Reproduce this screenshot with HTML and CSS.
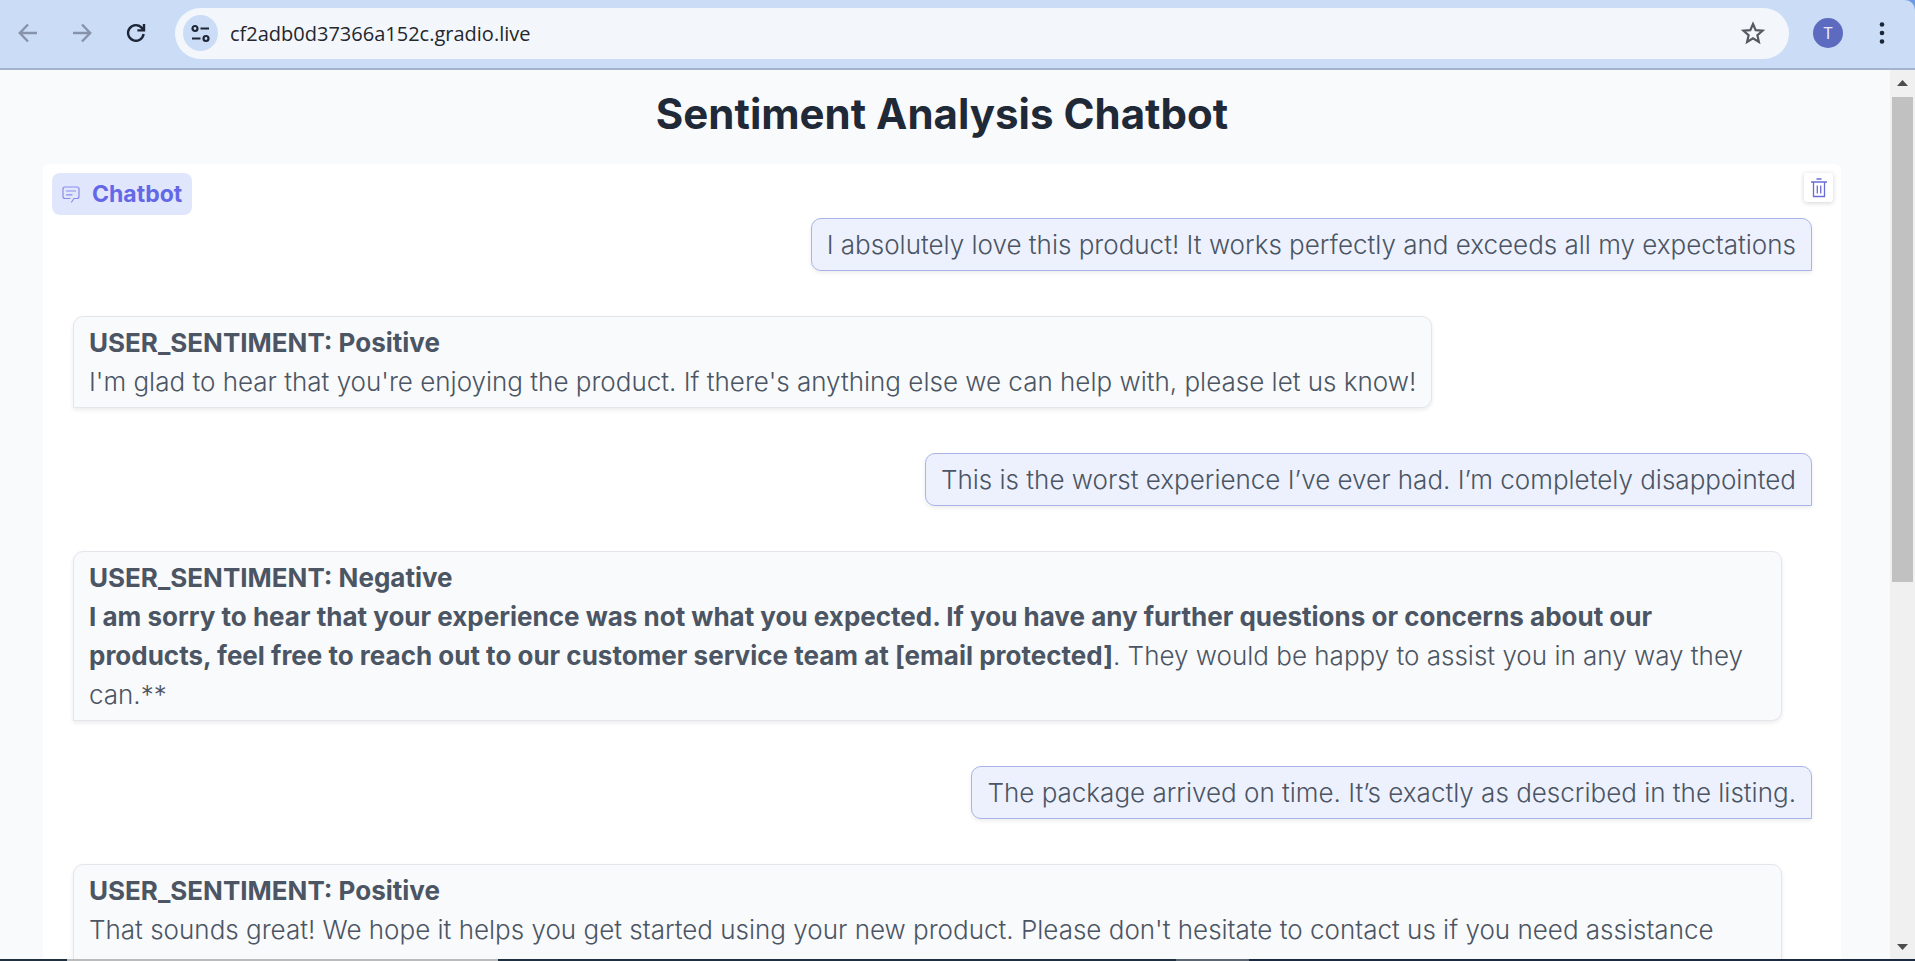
FILE: index.html
```html
<!DOCTYPE html>
<html lang="en">
<head>
<meta charset="utf-8">
<title>Sentiment Analysis Chatbot</title>
<link rel="stylesheet" href="styles.css">
</head>
<body>
<div class="browser-frame">
<header class="toolbar">
  <button class="tool-button tool-button-muted" aria-label="Back">
    <svg width="20" height="20" viewBox="0 0 20 20" fill="none" stroke="currentColor" stroke-width="2.4"><path d="M19 10H2M10 1.5L1.8 10L10 18.5"/></svg>
  </button>
  <button class="tool-button tool-button-muted" aria-label="Forward">
    <svg width="20" height="20" viewBox="0 0 20 20" fill="none" stroke="currentColor" stroke-width="2.4"><path d="M1 10H18M10 1.5L18.2 10L10 18.5"/></svg>
  </button>
  <button class="tool-button" aria-label="Reload">
    <svg width="20" height="20" viewBox="0 0 20 20" fill="none" stroke="currentColor" stroke-width="2.4"><path d="M17.6 11A7.8 7.8 0 1 1 16 5.1L17.2 6.6M18 1V7.4H11.4"/></svg>
  </button>
  <div class="address-bar">
    <button class="site-info" aria-label="View site information">
      <svg width="19" height="19" viewBox="0 0 19 19" fill="none" stroke="currentColor" stroke-width="2.2"><circle cx="4" cy="4.5" r="2.5"/><path d="M9.500 4.500H18M1 14.500H9.500"/><circle cx="15" cy="14.500" r="2.500"/></svg>
    </button>
    <input class="address-input" type="text" aria-label="Address" value="cf2adb0d37366a152c.gradio.live">
    <button class="bookmark" aria-label="Bookmark this page">
      <svg width="24" height="24" viewBox="0 0 24 24" fill="none" stroke="currentColor" stroke-width="2.2"><path d="M12 3L14.700 9.100L21.500 9.700L16.400 14.200L17.900 21L12 17.400L6.100 21L7.600 14.200L2.500 9.700L9.300 9.100Z"/></svg>
    </button>
  </div>
  <button class="avatar" aria-label="Profile">T</button>
  <button class="menu-button" aria-label="Browser menu">
    <svg width="6" height="22" viewBox="0 0 6 22" fill="currentColor"><circle cx="3" cy="2.500" r="2.300"/><circle cx="3" cy="11" r="2.300"/><circle cx="3" cy="19.500" r="2.300"/></svg>
  </button>
</header>
</div>
<div class="viewport">
  <main class="page">
    <h1 class="title">Sentiment Analysis Chatbot</h1>
    <section class="chat-panel">
      <div class="panel-header">
        <h2 class="panel-label">
          <svg width="18" height="17" viewBox="0 0 18 17" fill="none" stroke="currentColor" stroke-width="1.200" stroke-linecap="round" stroke-linejoin="round"><path d="M8 12.500H3Q1 12.500 1 10.500V3Q1 1 3 1H15Q17 1 17 3V10.500Q17 12.500 15 12.500H12L9.600 16M4.500 5H13.500M4.500 8.800H10"/></svg>
          <span>Chatbot</span>
        </h2>
        <button class="clear-button" aria-label="Clear">
          <svg width="16" height="20" viewBox="0 0 16 20" fill="none" stroke="currentColor" stroke-width="1.300"><path d="M5.500 1H10.500M0 4H16M2.500 4V18.500H13.500V4M6.300 7.500V15.500M9.700 7.500V15.500"/></svg>
        </button>
      </div>
      <div class="messages">
        <div class="message message-user">I absolutely love this product! It works perfectly and exceeds all my expectations</div>
        <div class="message message-bot"><strong>USER_SENTIMENT: Positive</strong><br>I'm glad to hear that you're enjoying the product. If there's anything else we can help with, please let us know!</div>
        <div class="message message-user">This is the worst experience I’ve ever had. I’m completely disappointed</div>
        <div class="message message-bot"><strong>USER_SENTIMENT: Negative</strong><br><strong>I am sorry to hear that your experience was not what you expected. If you have any further questions or concerns about our products, feel free to reach out to our customer service team at [email protected]</strong>. They would be happy to assist you in any way they can.**</div>
        <div class="message message-user">The package arrived on time. It’s exactly as described in the listing.</div>
        <div class="message message-bot message-fill"><strong>USER_SENTIMENT: Positive</strong><br>That sounds great! We hope it helps you get started using your new product. Please don't hesitate to contact us if you need assistance</div>
      </div>
    </section>
  </main>
  <div class="scrollbar" aria-hidden="true">
    <svg width="11" height="6" viewBox="0 0 11 6"><path d="M5.500 0L11 6H0Z" fill="#4d4d4d"/></svg>
    <div class="scroll-track"><div class="scroll-thumb"></div></div>
    <svg width="11" height="6" viewBox="0 0 11 6"><path d="M5.500 6L11 0H0Z" fill="#4d4d4d"/></svg>
  </div>
</div>
<footer class="edge"></footer>
</body>
</html>
```
FILE: styles.css
```css
* { box-sizing: border-box; }

body {
  display: flex;
  flex-direction: column;
  height: 100vh;
  margin: 0;
  overflow: hidden;
  background: #f9fafc;
  font-family: Inter, "Liberation Sans", sans-serif;
}

button {
  display: flex;
  align-items: center;
  justify-content: center;
  flex: none;
  margin: 0;
  padding: 0;
  border: 0;
  background: none;
  color: #1d2536;
}

.browser-frame { flex: none; background: #6c9be3; }

.toolbar {
  display: flex;
  align-items: center;
  height: 70px;
  padding: 0 24px 2px 10px;
  border-bottom: 2px solid #a4b3cc;
  border-top-right-radius: 10px;
  background: #cbdcf6;
}

.tool-button { width: 36px; height: 36px; margin-right: 18px; }
.tool-button-muted { color: #8693aa; }

.address-bar {
  display: flex;
  align-items: center;
  flex: 1;
  height: 51px;
  margin-left: 3px;
  padding: 0 24px 0 8px;
  border-radius: 26px;
  background: #f3f7fc;
}

.site-info { width: 35px; height: 36px; border-radius: 50%; background: #cbdcf6; }

.address-input {
  flex: 1;
  min-width: 0;
  height: 40px;
  padding: 0 0 0 12px;
  border: 0;
  outline: 0;
  background: none;
  color: #24272c;
  font: 20px "Open Sans", "Noto Sans", sans-serif;
}

.bookmark { width: 24px; height: 24px; color: #55595f; }

.avatar {
  width: 30px;
  height: 30px;
  margin-left: 24px;
  border-radius: 50%;
  background: #5c6bc0;
  color: #e8eaf6;
  font: 16px Roboto, sans-serif;
}

.menu-button { width: 18px; height: 30px; margin-left: 30px; }

.viewport { display: flex; flex: 1; min-height: 0; }

.page { flex: 1; min-width: 0; padding: 19px 49px 0 43px; overflow: hidden; }

.title {
  margin: 0 0 25px;
  color: #1f2937;
  font-size: 42px;
  font-weight: 700;
  line-height: 50px;
  text-align: center;
}

.chat-panel { border-radius: 6px; background: #fff; }

.panel-header {
  display: flex;
  align-items: flex-start;
  justify-content: space-between;
  padding: 9px 8px 0 9px;
}

.panel-label {
  display: flex;
  align-items: center;
  gap: 12px;
  height: 42px;
  margin: 0;
  padding: 0 10px;
  border-radius: 8px;
  background: #e0e7fd;
  color: #6467e6;
  font-size: 23px;
  font-weight: 700;
}
.panel-label svg { color: #8a8cec; }

.clear-button {
  width: 29px;
  height: 29px;
  border-radius: 3px;
  background: #fff;
  box-shadow: 0 1px 5px rgb(0 0 0 / 18%);
  color: #6a6cd6;
}

.messages {
  display: flex;
  flex-direction: column;
  gap: 45px;
  padding: 3px 29px 0 30px;
}

.message {
  max-width: calc(100% - 30px);
  padding: 6px 15px;
  border: 1px solid #e3e6eb;
  border-radius: 10px;
  color: #4b5563;
  font-size: 26px;
  font-weight: 350;
  line-height: 39px;
  box-shadow: 0 2px 4px rgb(0 0 0 / 8%);
}

.message strong { font-weight: 700; }

.message-bot {
  align-self: flex-start;
  border-bottom-left-radius: 0;
  background: #f9fafc;
}

.message-user {
  align-self: flex-end;
  border-color: #aab4ea;
  border-bottom-right-radius: 0;
  background: #edf1fe;
}

.message-fill { width: 100%; min-height: 170px; }

.scrollbar {
  display: flex;
  flex: none;
  flex-direction: column;
  align-items: center;
  gap: 11px;
  width: 25px;
  padding: 10px 0 9px;
  background: #f0f0f0;
}

.scroll-track { flex: 1; width: 21px; }
.scroll-thumb { height: 58%; background: #c1c1c1; }

.edge {
  flex: none;
  height: 2px;
  background: linear-gradient(90deg, #20303f 3.5%, #b9bbbc 3.5% 26%, #1f2f42 26% 61.4%, #5c6672 61.4% 65.2%, #1b2a41 65.2%);
}
```
